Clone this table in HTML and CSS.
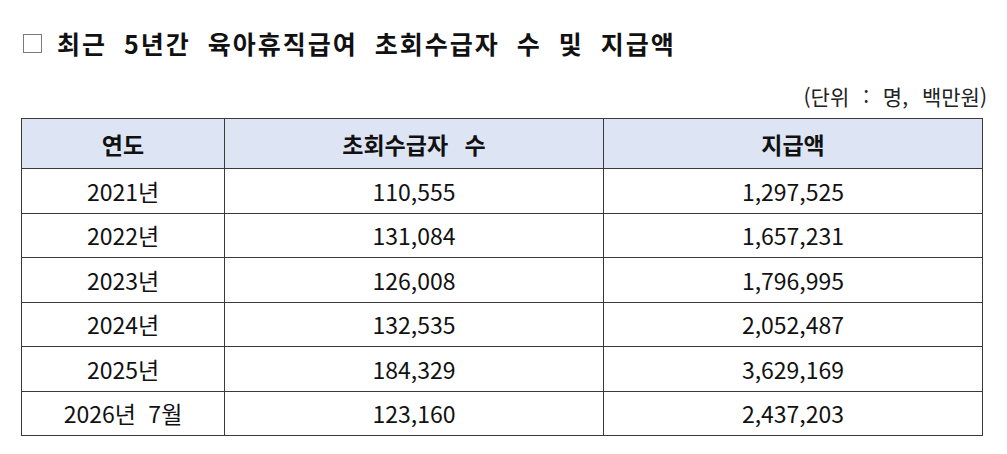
FILE: index.html
```html
<!DOCTYPE html>
<html lang="ko">
<head>
<meta charset="utf-8">
<link rel="stylesheet" href="styles.css">
</head>
<body>
<div class="page">
  <h1 class="title"><span class="box"></span><span class="title-text">최근 5년간 육아휴직급여 초회수급자 수 및 지급액</span></h1>
  <div class="unit">(단위 : 명, 백만원)</div>
  <table class="data">
    <colgroup>
      <col class="c1"><col class="c2"><col class="c3">
    </colgroup>
    <thead>
      <tr><th>연도</th><th>초회수급자 수</th><th>지급액</th></tr>
    </thead>
    <tbody>
      <tr><td>2021년</td><td>110,555</td><td>1,297,525</td></tr>
      <tr><td>2022년</td><td>131,084</td><td>1,657,231</td></tr>
      <tr><td>2023년</td><td>126,008</td><td>1,796,995</td></tr>
      <tr><td>2024년</td><td>132,535</td><td>2,052,487</td></tr>
      <tr><td>2025년</td><td>184,329</td><td>3,629,169</td></tr>
      <tr><td>2026년 7월</td><td>123,160</td><td>2,437,203</td></tr>
    </tbody>
  </table>
</div>
</body>
</html>
```

FILE: styles.css
```css
html, body {
  margin: 0;
  padding: 0;
  background: #ffffff;
}
.page {
  padding: 27px 20px 0 21px;
  font-family: "Noto Sans CJK KR", "Noto Sans", sans-serif;
  color: #111;
}
.title {
  margin: 0;
  display: flex;
  align-items: center;
  gap: 15px;
  font-size: 25px;
  font-weight: 700;
  line-height: 32px;
  height: 32px;
}
.box {
  width: 17px;
  height: 17px;
  border: 1px solid #7a7a7a;
  margin-left: 2px;
  flex: none;
}
.title-text {
  letter-spacing: 2px;
  word-spacing: 8px;
}
.unit {
  margin-top: 23px;
  text-align: right;
  font-size: 21px;
  line-height: 28px;
  height: 36px;
  color: #222;
  word-spacing: 8px;
}
.data {
  width: 961px;
  border-collapse: collapse;
  table-layout: fixed;
  font-size: 23px;
}
.c1 { width: 203px; }
.c2 { width: 379px; }
.c3 { width: 379px; }
.data th, .data td {
  border: 1px solid #3a3a3a;
  text-align: center;
  padding: 0;
  line-height: 28px;
}
.data th {
  background: #dde5f5;
  font-weight: 700;
  font-size: 23px;
  height: 49px;
  word-spacing: 10px;
}
.data td {
  height: 43.5px;
  font-weight: 400;
  word-spacing: 6px;
}
```
